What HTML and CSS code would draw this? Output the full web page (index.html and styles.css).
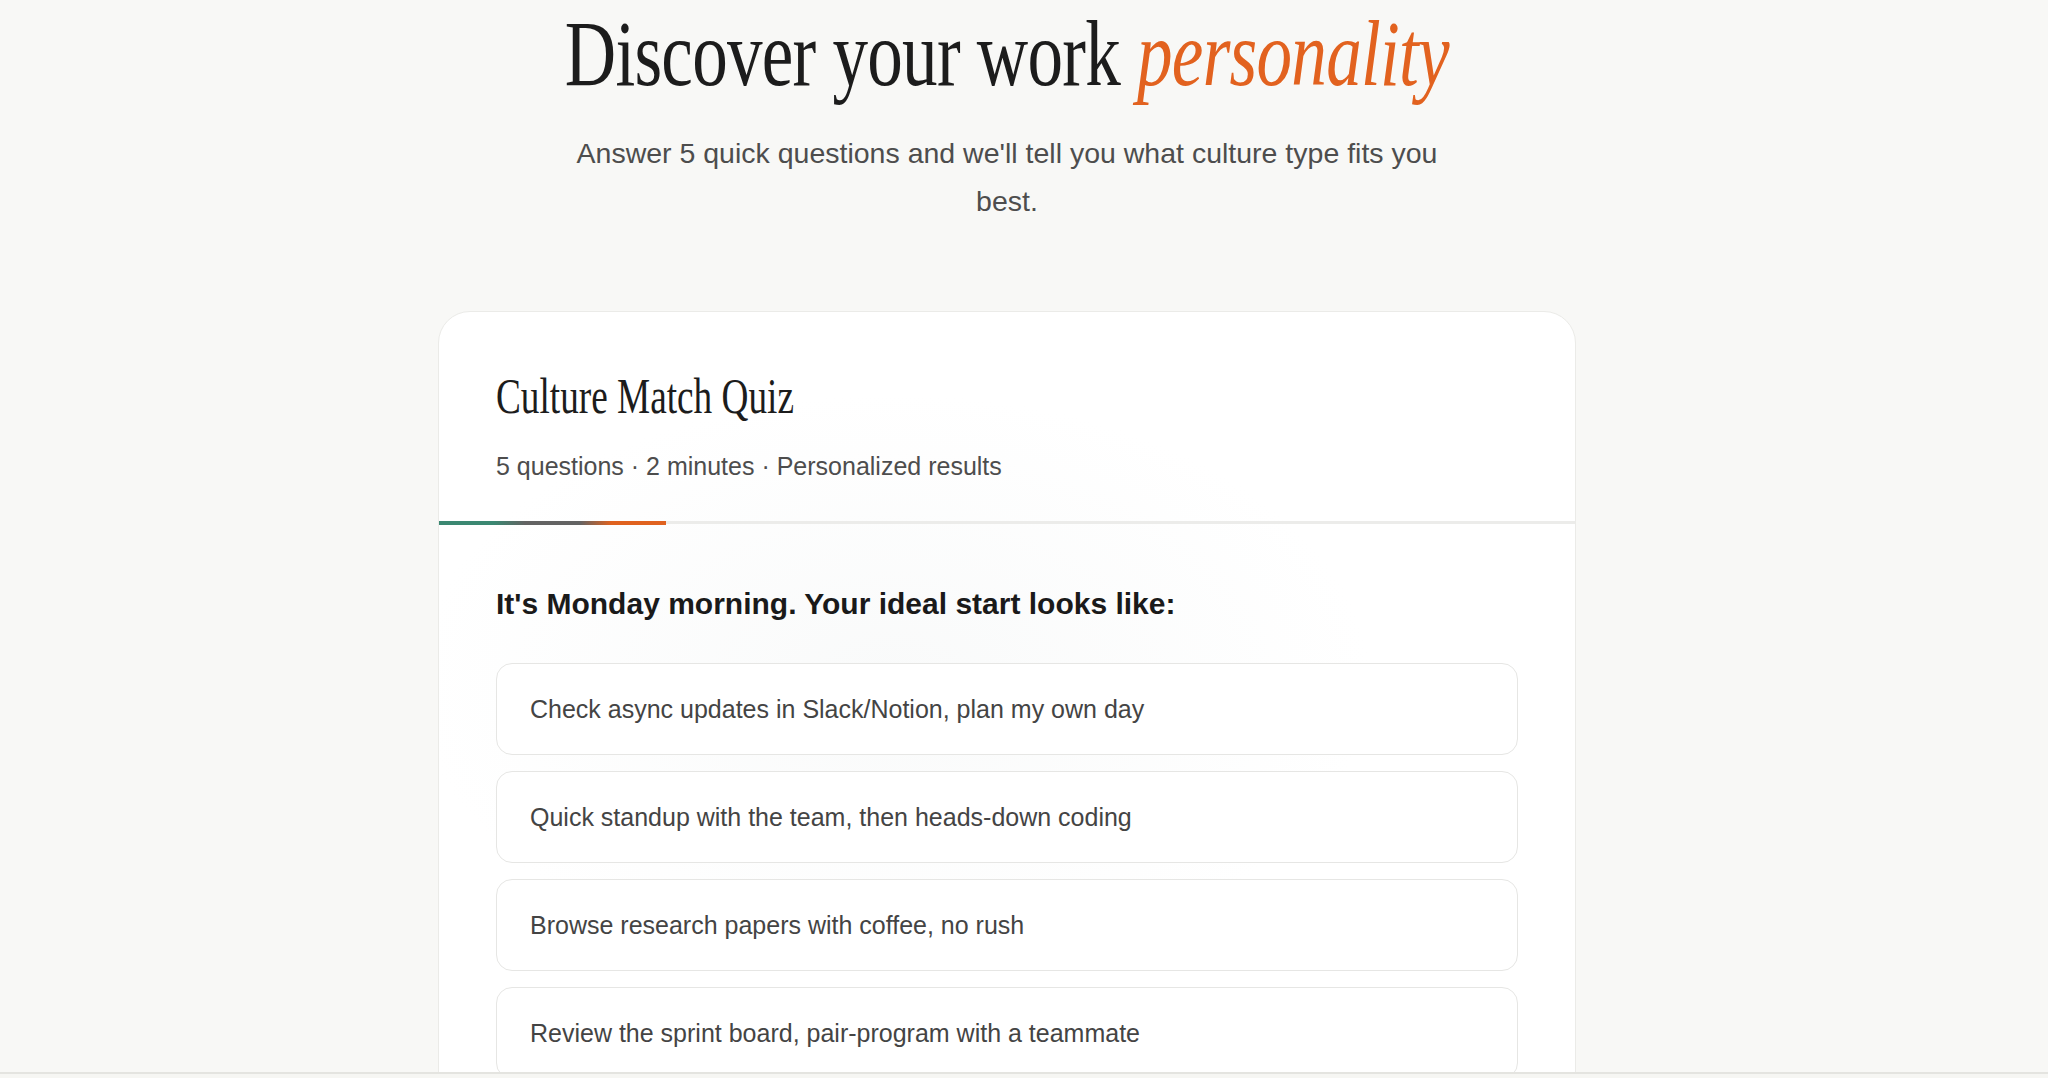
FILE: index.html
```html
<!DOCTYPE html>
<html lang="en">
<head>
    <meta charset="UTF-8">
    <meta name="viewport" content="width=device-width, initial-scale=1.0">
    <title>Culture Match Quiz</title>
    <link rel="stylesheet" href="styles.css">
</head>
<body>
    <div class="page">
        <!-- Hero -->
        <header class="hero">
            <h1 class="hero-title"><span class="narrow">Discover your work <em>personality</em></span></h1>
            <p class="hero-sub">Answer 5 quick questions and we'll tell you what culture type fits you best.</p>
        </header>

        <!-- Quiz card -->
        <section class="quiz-card">
            <div class="quiz-head">
                <h2 class="quiz-title"><span class="narrow">Culture Match Quiz</span></h2>
                <p class="quiz-meta">5 questions · 2 minutes · Personalized results</p>
            </div>

            <div class="progress">
                <div class="progress-fill" style="width: 20%"></div>
            </div>

            <div class="quiz-body">
                <h3 class="question">It's Monday morning. Your ideal start looks like:</h3>
                <div class="options">
                    <button class="option">Check async updates in Slack/Notion, plan my own day</button>
                    <button class="option">Quick standup with the team, then heads-down coding</button>
                    <button class="option">Browse research papers with coffee, no rush</button>
                    <button class="option">Review the sprint board, pair-program with a teammate</button>
                </div>
            </div>
        </section>
    </div>

    <div class="bottom-bar"></div>
</body>
</html>
```

FILE: styles.css
```css
* {
    margin: 0;
    padding: 0;
    box-sizing: border-box;
}

body {
    background-color: #f8f8f6;
    font-family: 'Liberation Sans', Arial, sans-serif;
    color: #1a1a1a;
    height: 1078px;
    overflow: hidden;
}

.page {
    padding: 4px 34px 0 0;
}

/* Hero */
.hero {
    text-align: center;
}

.hero-title {
    font-family: 'Liberation Serif', 'Times New Roman', serif;
    font-weight: 400;
    font-size: 93px;
    line-height: 100px;
    color: #1c1c1c;
    letter-spacing: -1px;
}

.narrow {
    display: inline-block;
    transform: scaleX(0.765);
    white-space: nowrap;
}

.hero-title em {
    color: #e2621f;
    font-style: italic;
}

.hero-sub {
    max-width: 900px;
    margin: 25px auto 0;
    font-size: 28.5px;
    line-height: 48px;
    color: #4d4d4d;
}

/* Card */
.quiz-card {
    width: 1138px;
    margin: 86px auto 0;
    background: radial-gradient(ellipse 60% 50% at 40% 45%, #f9fafa 0%, #ffffff 70%);
    border: 1px solid #ebebe8;
    border-radius: 32px;
    overflow: hidden;
}

.quiz-head {
    padding: 54px 57px 37px;
}

.quiz-title {
    font-family: 'Liberation Serif', 'Times New Roman', serif;
    font-weight: 400;
    font-size: 50px;
    line-height: 60px;
    color: #1c1c1c;
}

.quiz-title .narrow {
    transform: scaleX(0.745);
    transform-origin: left center;
}

.quiz-meta {
    margin-top: 22px;
    font-size: 25px;
    line-height: 36px;
    color: #4d4d4d;
}

.progress {
    height: 4px;
    background: linear-gradient(#ececea 0 3px, transparent 3px);
}

.progress-fill {
    height: 4px;
    background: linear-gradient(90deg, #3b8872 0%, #3b8872 24%, #636363 38%, #636363 62%, #e0621f 76%, #e0621f 100%);
}

.quiz-body {
    padding: 61px 57px 60px;
}

.question {
    font-size: 30px;
    line-height: 36px;
    font-weight: 700;
    color: #1a1a1a;
}

.options {
    margin-top: 41px;
    display: flex;
    flex-direction: column;
    gap: 16px;
}

.option {
    display: flex;
    align-items: center;
    height: 92px;
    padding: 0 33px;
    background: #fff;
    border: 1px solid #e6e6e4;
    border-radius: 16px;
    font-family: 'Liberation Sans', Arial, sans-serif;
    font-size: 25px;
    color: #444;
    text-align: left;
    cursor: pointer;
}

.option:hover {
    border-color: #d0d0cc;
}

.bottom-bar {
    position: fixed;
    left: 0;
    right: 0;
    bottom: 0;
    height: 6px;
    background: #f6f6f3;
    border-top: 2px solid #e4e4e0;
}
```
